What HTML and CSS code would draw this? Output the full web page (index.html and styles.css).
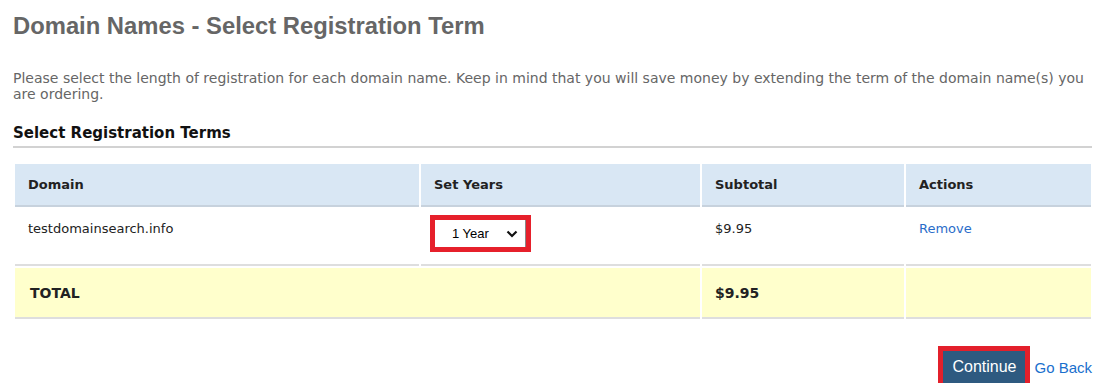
FILE: index.html
```html
<!DOCTYPE html>
<html>
<head>
<meta charset="utf-8">
<link rel="stylesheet" href="styles.css">
</head>
<body>
<div class="page">
  <h1 class="title">Domain Names - Select Registration Term</h1>
  <p class="intro">Please select the length of registration for each domain name. Keep in mind that you will save money by extending the term of the domain name(s) you are ordering.</p>
  <h3 class="section">Select Registration Terms</h3>
  <table class="terms">
    <colgroup>
      <col class="w-domain"><col class="w-years"><col class="w-sub"><col class="w-act">
    </colgroup>
    <thead>
      <tr>
        <th>Domain</th>
        <th>Set Years</th>
        <th>Subtotal</th>
        <th>Actions</th>
      </tr>
    </thead>
    <tbody>
      <tr class="item">
        <td>testdomainsearch.info</td>
        <td class="sel-cell">
          <span class="sel-wrap">
            <select class="years"><option>1 Year</option><option>2 Years</option><option>3 Years</option></select>
            <svg class="chev" width="12" height="8" viewBox="0 0 12 8"><path d="M1.5 1.5 L6 6 L10.5 1.5" fill="none" stroke="#111" stroke-width="2.2"/></svg>
          </span>
        </td>
        <td>$9.95</td>
        <td><a class="link" href="#">Remove</a></td>
      </tr>
      <tr class="total">
        <td colspan="2" class="t-label">TOTAL</td>
        <td class="t-amt">$9.95</td>
        <td></td>
      </tr>
    </tbody>
  </table>
  <div class="actions">
    <button class="btn">Continue</button>
    <a class="back" href="#">Go Back</a>
  </div>
</div>
</body>
</html>
```
FILE: styles.css
```css
html, body { margin: 0; padding: 0; background: #fff; }
.page { padding: 12px 20px 0 13px; font-family: "DejaVu Sans", Verdana, sans-serif; font-size: 13px; color: #666; }
.title { margin: 0; font-family: "Liberation Sans", Arial, sans-serif; font-size: 23.8px; line-height: 28px; font-weight: bold; color: #666; }
.intro { margin: 30px 0 0 0; font-size: 14px; line-height: 16px; color: #666; }
.section { margin: 22px 0 0 0; font-size: 15px; line-height: 18px; font-weight: bold; color: #111; padding-bottom: 4px; border-bottom: 2px solid #d2d2d2; }
.terms { margin-top: 14px; width: 1080px; table-layout: fixed; border-collapse: separate; border-spacing: 2px; font-size: 13px; color: #222; }
.w-domain { width: 404px; }
.w-years { width: 279px; }
.w-sub { width: 202px; }
.w-act { width: 185px; }
.terms th { background: #d9e7f4; text-align: left; font-weight: bold; height: 43px; padding: 0 13px; border-bottom: 2px solid #c7d2dd; color: #222; box-sizing: border-box; }
.item td { vertical-align: top; padding: 12px 13px 0 13px; height: 43px; border-bottom: 2px solid #dedede; }
.item td.sel-cell { padding: 11px 13px 0 14px; }
.sel-wrap { position: relative; display: inline-block; outline: 5px solid #e6202b; }
.years { appearance: none; -webkit-appearance: none; border: 0; border-right: 1px solid #888; border-radius: 0; background: #fff; font-family: "Liberation Sans", Arial, sans-serif; font-size: 13px; color: #000; width: 91px; height: 27px; padding: 0 0 0 17px; display: block; margin: 0; }
.chev { position: absolute; right: 8px; top: 10px; pointer-events: none; }
.link { color: #2a6dc9; text-decoration: none; }
.total td { background: #ffffcc; height: 49px; border-bottom: 2px solid #dedede; font-weight: bold; color: #222; padding: 0 13px; }
.total td.t-label { padding-left: 15px; font-size: 14px; }
.total td.t-amt { font-size: 14px; }
.actions { display: flex; justify-content: flex-end; align-items: center; gap: 9px; margin-top: 30px; padding-right: 0; }
.btn { background: #2e5a80; color: #fff; border: 0; font-family: "Liberation Sans", Arial, sans-serif; font-size: 16px; padding: 0 9px; height: 32px; outline: 5px solid #e3202b; box-shadow: 0 3px 4px rgba(0,0,0,0.25); }
.back { font-family: "Liberation Sans", Arial, sans-serif; font-size: 15px; color: #1a6fcd; text-decoration: none; }
```
